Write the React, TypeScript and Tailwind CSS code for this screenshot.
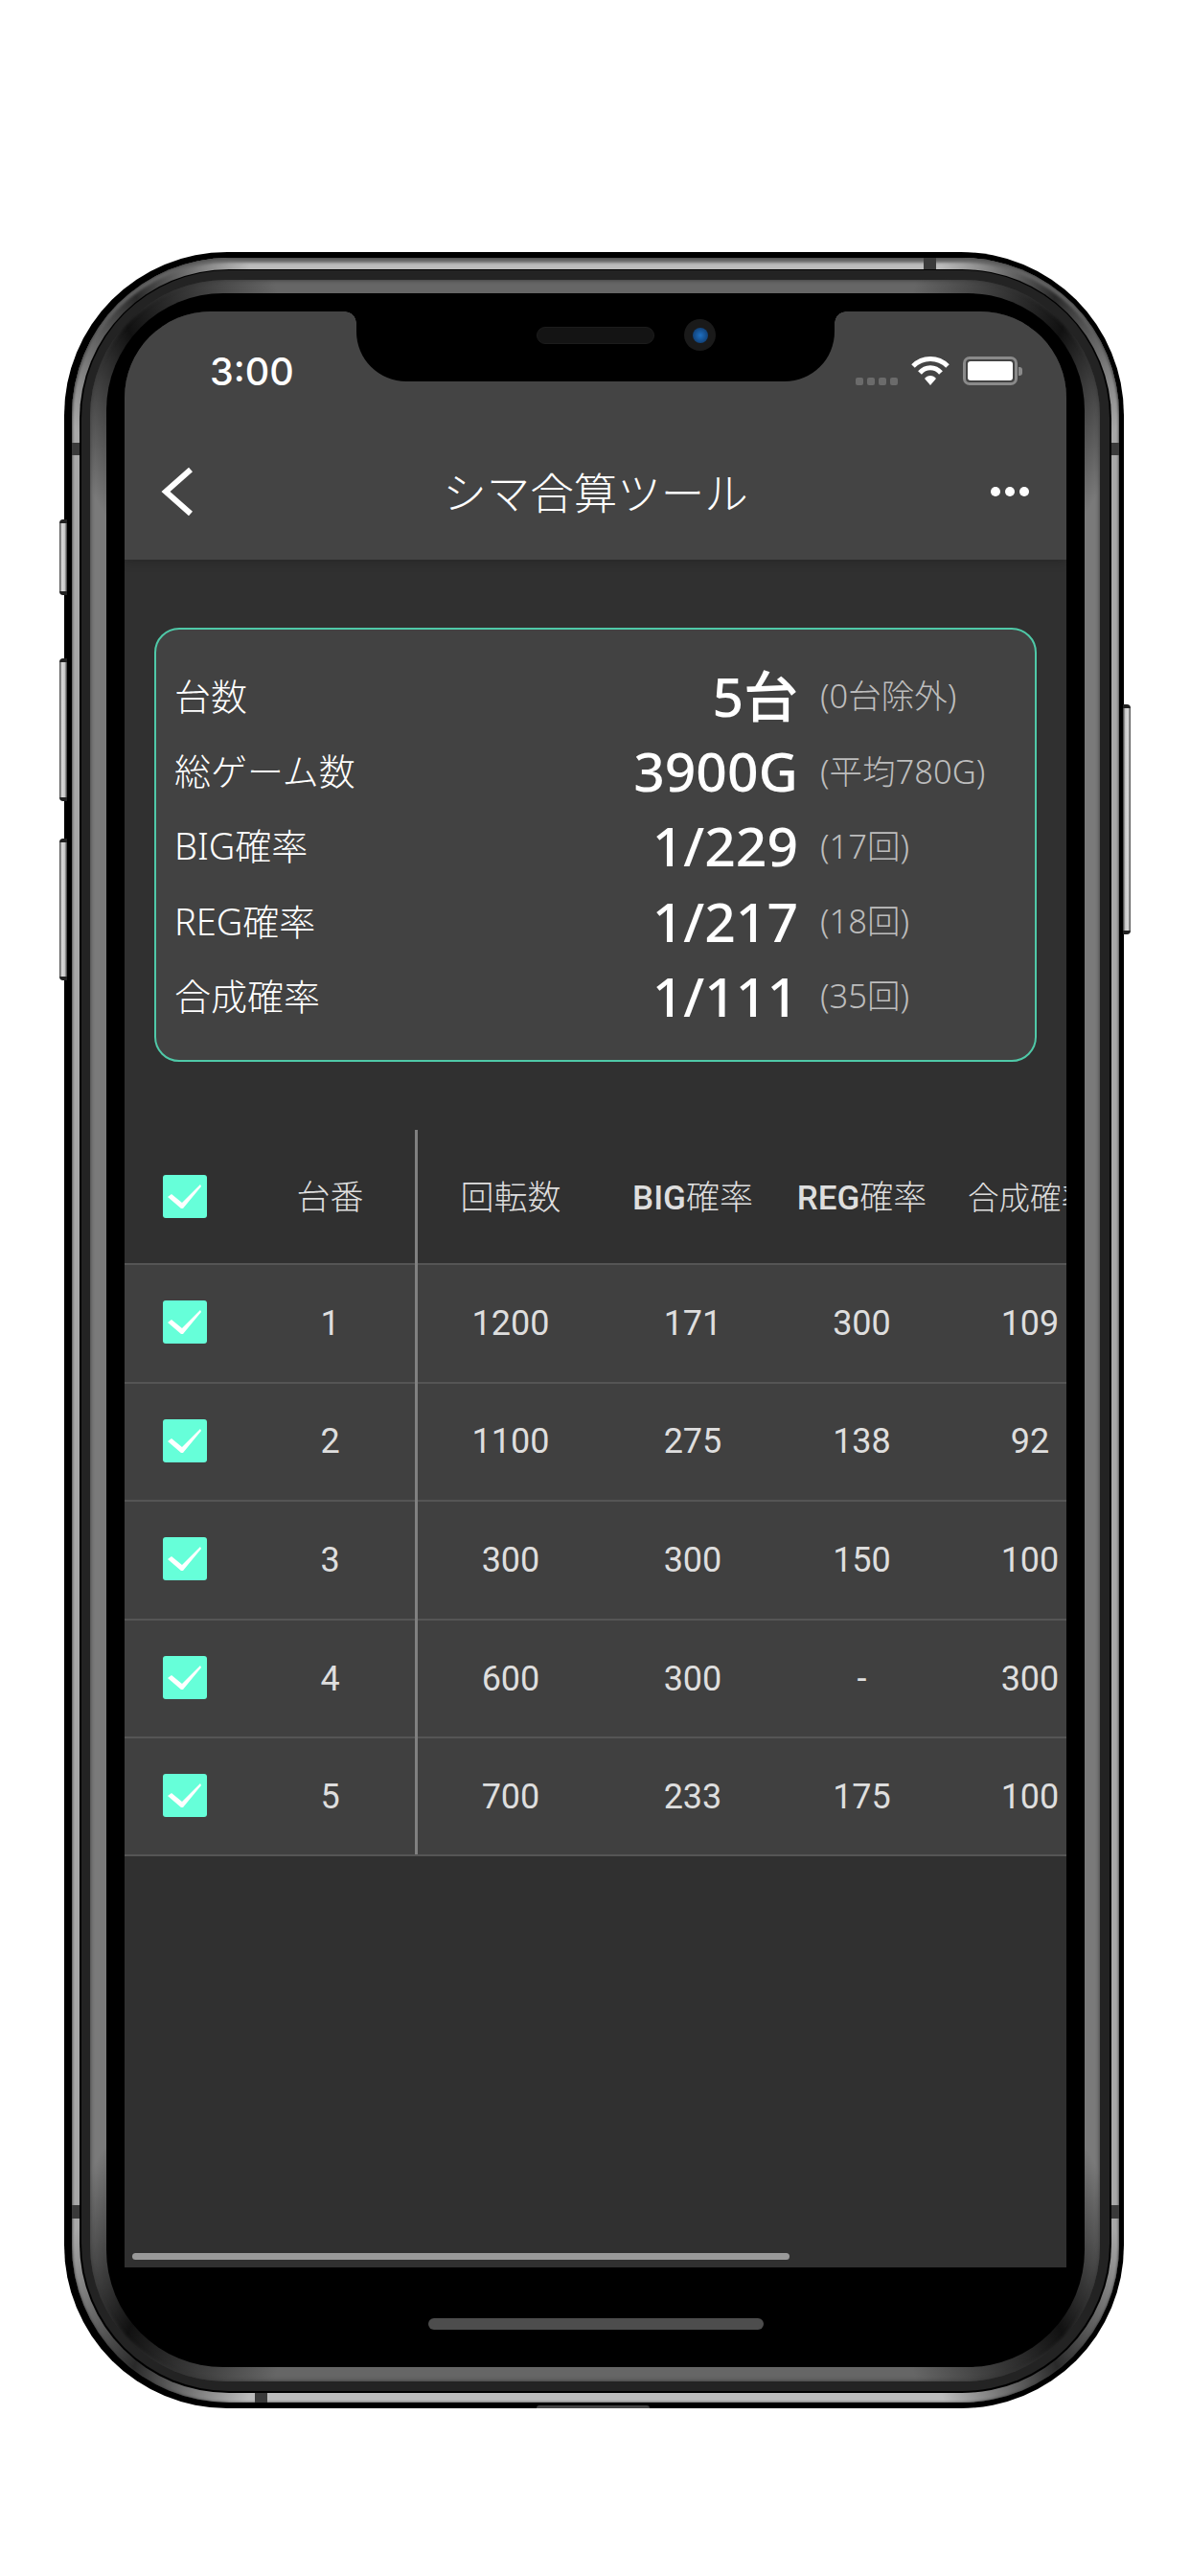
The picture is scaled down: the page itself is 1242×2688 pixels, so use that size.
const cjk = "font-['Noto_Sans','Noto_Sans_CJK_JP',sans-serif]";

const summary = [
  { label: "台数", value: "5台", note: "(0台除外)" },
  { label: "総ゲーム数", value: "3900G", note: "(平均780G)" },
  { label: "BIG確率", value: "1/229", note: "(17回)" },
  { label: "REG確率", value: "1/217", note: "(18回)" },
  { label: "合成確率", value: "1/111", note: "(35回)" },
];

const rows = [
  ["1", "1200", "171", "300", "109"],
  ["2", "1100", "275", "138", "92"],
  ["3", "300", "300", "150", "100"],
  ["4", "600", "300", "-", "300"],
  ["5", "700", "233", "175", "100"],
];

function Check() {
  return (
    <div className="h-[45px] w-[46px] rounded-[3px] bg-[#66ffd9]">
      <svg width="46" height="45" viewBox="0 0 46 45" fill="#fff">
        <path d="M5 23 L9 20 L20 29 L39 10 L40 12 L21 35 L19 35 Z" />
      </svg>
    </div>
  );
}

function Cols({ cells }: { cells: React.ReactNode[] }) {
  return (
    <>
      <div className="w-[126px] shrink-0 pl-[40px]">{cells[0]}</div>
      <div className="flex w-[180px] shrink-0 items-center justify-center self-stretch border-r-[3px] border-[#808080]">
        {cells[1]}
      </div>
      <div className="w-[194px] shrink-0 text-center">{cells[2]}</div>
      <div className="w-[186px] shrink-0 text-center">{cells[3]}</div>
      <div className="w-[167px] shrink-0 text-center">{cells[4]}</div>
      <div className="w-[184px] shrink-0 whitespace-nowrap text-center">{cells[5]}</div>
    </>
  );
}

function Latin({ children }: { children: string }) {
  return <span className="font-['Roboto'] font-medium">{children}</span>;
}

function Head({ children }: { children: React.ReactNode }) {
  return <span className="inline-block translate-y-[3px]">{children}</span>;
}

function Num({ children }: { children: React.ReactNode }) {
  return <span className="inline-block translate-y-[1px]">{children}</span>;
}

function Screen() {
  return (
    <div className="relative h-[2041px] w-[983px] shrink-0 overflow-hidden rounded-t-[90px] bg-[#303030]">
      {/* header */}
      <div className="relative z-10 h-[259px] bg-[#444444] shadow-[0_3px_10px_rgba(0,0,0,0.18)]">
        <div className="flex h-[30px] translate-y-[47px] items-end justify-between pl-[89px] pr-[46px]">
          <span className="translate-y-[1px] font-['Inter'] text-[39.5px] leading-[30px] font-medium text-white">3:00</span>
          <div className="flex items-end gap-[14px]">
            <div className="flex gap-[4px]">
              {[0, 1, 2, 3].map((i) => (
                <div key={i} className="h-[8px] w-[8px] rounded-[2px] bg-[#6b6b6b]" />
              ))}
            </div>
            <svg width="40" height="31" viewBox="0 0 40 31" fill="none">
              <path d="M2 11 C12 1 28 1 38 11" stroke="#fff" strokeWidth="5" />
              <path d="M9 18 C15 11 25 11 31 18" stroke="#fff" strokeWidth="5" />
              <path d="M14 24 L20 31 L26 24 C23 20 17 20 14 24 Z" fill="#fff" />
            </svg>
            <div className="flex items-center gap-[1px]">
              <div className="h-[30px] w-[57px] rounded-[7px] border-[3px] border-[#8a8a8a] p-[2px]">
                <div className="h-full w-full rounded-[3px] bg-white" />
              </div>
              <div className="h-[9px] w-[4px] rounded-r-[3px] bg-[#8a8a8a]" />
            </div>
          </div>
        </div>
        <div className="flex h-[100px] translate-y-[107px] items-center">
          <div className="w-[200px] shrink-0 pl-[38px]">
            <svg width="36" height="56" viewBox="0 0 36 56" fill="none" className="translate-y-[1px]">
              <path d="M31 5 L5 28 L31 51" stroke="#fff" strokeWidth="6" />
            </svg>
          </div>
          <div className="flex-1 text-center font-['Noto_Sans_CJK_JP',sans-serif] text-[45.5px] font-light text-white">
            シマ合算ツール
          </div>
          <div className="flex w-[200px] shrink-0 translate-y-[1px] justify-end gap-[5px] pr-[39px]">
            {[0, 1, 2].map((i) => (
              <div key={i} className="h-[10px] w-[10px] rounded-full bg-white" />
            ))}
          </div>
        </div>
      </div>

      {/* summary card */}
      <div
        className={`ml-[31px] mt-[71px] h-[453px] w-[921px] rounded-[26px] border-2 border-[#4fc9a8] bg-[#424242] pl-[19px] pt-[30px] ${cjk}`}
      >
        {summary.map((s) => (
          <div key={s.label} className="flex h-[78.3px] items-center">
            <div className="w-[380px] text-[38px] font-light text-white">{s.label}</div>
            <div className="w-[271px] text-right text-[57px] font-medium leading-none text-white">{s.value}</div>
            <div className="ml-[23px] text-[34.5px] font-light text-[#bdbdbd]">{s.note}</div>
          </div>
        ))}
      </div>

      {/* table */}
      <div className="mt-[71px] font-['Roboto','Noto_Sans_CJK_JP',sans-serif] text-[36px] text-[#dedede]">
        <div className="flex h-[139px] items-center bg-[#303030] text-[35px] font-light">
          <Cols
            cells={[
              <Check />,
              <Head>台番</Head>,
              <Head>回転数</Head>,
              <Head>
                <Latin>BIG</Latin>確率
              </Head>,
              <Head>
                <Latin>REG</Latin>確率
              </Head>,
              <Head>
                <span className="text-[32.5px]">合成確率</span>
              </Head>,
            ]}
          />
        </div>
        {rows.map((r) => (
          <div
            key={r[0]}
            className="flex h-[123.6px] items-center bg-[#404040] shadow-[inset_0_2px_0_#555555] last:h-[125px] last:border-b-2 last:border-[#555555]"
          >
            <Cols cells={[<Check />, ...r.map((v) => <Num>{v}</Num>)]} />
          </div>
        ))}
      </div>

      {/* scroll indicator */}
      <div className="absolute bottom-[8px] left-[8px] h-[7px] w-[686px] rounded-full bg-[#999999]" />

      {/* notch */}
      <div className="absolute left-[242px] top-0 z-20 h-[73px] w-[499px] rounded-b-[52px] bg-black">
        <div className="absolute -left-[12px] top-0 h-[12px] w-[12px] bg-[radial-gradient(circle_at_0_100%,transparent_11.5px,#000_12px)]" />
        <div className="absolute -right-[12px] top-0 h-[12px] w-[12px] bg-[radial-gradient(circle_at_100%_100%,transparent_11.5px,#000_12px)]" />
        <div className="absolute left-[188px] top-[16px] h-[18px] w-[123px] rounded-full border border-[#1c1c1c] bg-[#141414]" />
        <div className="absolute left-[342px] top-[8px] flex h-[33px] w-[33px] items-center justify-center rounded-full bg-[#1a1a1a]">
          <div className="h-[16px] w-[16px] rounded-full bg-[radial-gradient(circle,#1f6fc0,#0b2f5c)]" />
        </div>
      </div>
    </div>
  );
}

function Button({ className }: { className: string }) {
  return (
    <div
      className={`absolute w-[8px] rounded-l-[4px] border-y-[4px] border-[#222] bg-[linear-gradient(90deg,#444,#ddd_35%,#c4c4c4_70%,#333)] ${className}`}
    />
  );
}

function Tick({ className }: { className: string }) {
  return <div className={`absolute bg-[#3a3a3a] ${className}`} />;
}

export default function App() {
  return (
    <div className="min-h-[2688px] bg-white pl-[67px] pt-[263px]">
      <div className="relative h-[2250px] w-[1106px] rounded-[170px] bg-black pb-[6px] pl-[8px] pr-[5px] pt-[6px]">
        <Button className="-left-[5px] top-[279px] h-[79px]" />
        <Button className="-left-[5px] top-[424px] h-[149px]" />
        <Button className="-left-[5px] top-[612px] h-[148px]" />
        <Button className="-right-[7px] top-[472px] h-[240px] rotate-180" />

        {/* metal band */}
        <div className="h-full rounded-[164px] bg-[conic-gradient(#bcbcbc_0deg,#bcbcbc_18deg,#2a2a2a_24deg,#a8a8a8_30deg,#a8a8a8_150deg,#2a2a2a_156deg,#bcbcbc_162deg,#bcbcbc_198deg,#2a2a2a_204deg,#a8a8a8_210deg,#a8a8a8_330deg,#2a2a2a_336deg,#bcbcbc_342deg)] pb-[10px] pl-[8px] pr-[8px] pt-[12px] shadow-[inset_0_0_3px_#333,inset_0_5px_3px_#666]">
          <div className="h-full rounded-[156px] bg-black pb-[2px] pl-[2px] pr-[2px] pt-[1px]">
            <div className="h-full rounded-[154px] bg-[#232323] pb-[10px] pl-[9px] pr-[10px] pt-[10px]">
              {/* inner bevel */}
              <div className="h-full rounded-[142px] bg-[conic-gradient(#666_0deg,#666_17deg,#111_25deg,#7a7a7a_31deg,#7a7a7a_149deg,#111_155deg,#666_163deg,#666_197deg,#111_205deg,#7a7a7a_211deg,#7a7a7a_329deg,#111_335deg,#666_343deg)] pb-[15px] pl-[17px] pr-[16px] pt-[14px] shadow-[inset_0_0_4px_#333]">
                <div className="flex h-full flex-col items-center rounded-[122px] bg-black pt-[19px]">
                  <Screen />
                  <div className="mt-[53px] h-[12px] w-[350px] rounded-full bg-[#4d4d4d]" />
                </div>
              </div>
            </div>
          </div>
        </div>

        <Tick className="left-[897px] top-[6px] h-[12px] w-[13px]" />
        <Tick className="bottom-[6px] left-[199px] h-[10px] w-[13px]" />
        <Tick className="left-[8px] top-[199px] h-[13px] w-[8px]" />
        <Tick className="left-[8px] top-[2038px] h-[14px] w-[8px]" />
        <Tick className="right-[5px] top-[199px] h-[13px] w-[8px]" />
        <Tick className="right-[5px] top-[2038px] h-[14px] w-[8px]" />
        <div className="absolute bottom-0 left-[493px] h-[3px] w-[118px] rounded-t-[3px] bg-[#444]" />
      </div>
    </div>
  );
}
